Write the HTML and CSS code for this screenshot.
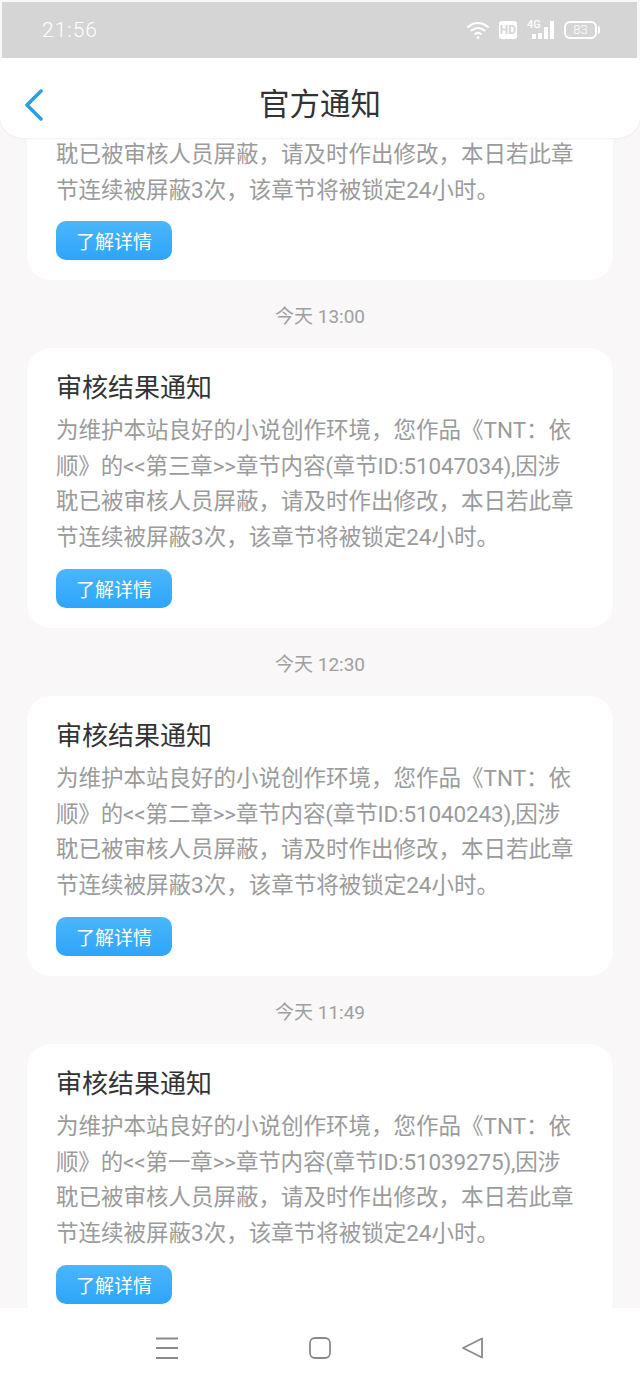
FILE: index.html
```html
<!DOCTYPE HTML>
<html>
<head>
  <title>官方通知</title>
  <meta name="viewport" content="width=device-width, initial-scale=1">
  <link rel="stylesheet" href="styles.css">
</head>
<body>
  <div class="status-bar">
    <span class="clock">21:56</span>
    <div class="status-icons">
      <svg class="wifi" width="22" height="20" viewBox="0 0 22 20" fill="none" stroke="#fff" stroke-width="2" stroke-linecap="round">
        <path d="M1 7C7 1.500 15 1.500 21 7"/>
        <path d="M4.500 10.500C8.500 7 13.500 7 17.500 10.500"/>
        <path d="M8 14C10 12.500 12 12.500 14 14"/>
        <circle cx="11" cy="17.500" r="1.600" fill="#fff" stroke="none"/>
      </svg>
      <span class="hd">HD</span>
      <div class="signal">
        <span class="net">4G</span>
        <i class="bar b1"></i><i class="bar b2"></i><i class="bar b3"></i><i class="bar b4"></i>
      </div>
      <div class="battery"><span>83</span></div>
    </div>
  </div>

  <div class="header">
    <svg class="back" width="20" height="32" viewBox="0 0 20 32" fill="none" stroke="#2a9fe8" stroke-width="3.500" stroke-linecap="round" stroke-linejoin="round">
      <path d="M17 2L3 16L17 30"/>
    </svg>
    <h1>官方通知</h1>
  </div>

  <div class="scroller">
    <div class="list">
      <div class="card card-first">
        <p>耽已被审核人员屏蔽，请及时作出修改，本日若此章<br>节连续被屏蔽3次，该章节将被锁定24小时。</p>
        <button class="more-btn">了解详情</button>
      </div>
      <div class="time">今天 13:00</div>
      <div class="card">
        <h3>审核结果通知</h3>
        <p>为维护本站良好的小说创作环境，您作品《TNT：依<br><span class="tight">顺》的&lt;&lt;第三章&gt;&gt;章节内容(章节ID:51047034),因涉</span><br>耽已被审核人员屏蔽，请及时作出修改，本日若此章<br>节连续被屏蔽3次，该章节将被锁定24小时。</p>
        <button class="more-btn">了解详情</button>
      </div>
      <div class="time">今天 12:30</div>
      <div class="card">
        <h3>审核结果通知</h3>
        <p>为维护本站良好的小说创作环境，您作品《TNT：依<br><span class="tight">顺》的&lt;&lt;第二章&gt;&gt;章节内容(章节ID:51040243),因涉</span><br>耽已被审核人员屏蔽，请及时作出修改，本日若此章<br>节连续被屏蔽3次，该章节将被锁定24小时。</p>
        <button class="more-btn">了解详情</button>
      </div>
      <div class="time">今天 11:49</div>
      <div class="card">
        <h3>审核结果通知</h3>
        <p>为维护本站良好的小说创作环境，您作品《TNT：依<br><span class="tight">顺》的&lt;&lt;第一章&gt;&gt;章节内容(章节ID:51039275),因涉</span><br>耽已被审核人员屏蔽，请及时作出修改，本日若此章<br>节连续被屏蔽3次，该章节将被锁定24小时。</p>
        <button class="more-btn">了解详情</button>
      </div>
    </div>
  </div>

  <div class="nav-bar">
    <svg width="24" height="24" viewBox="0 0 24 24" fill="none" stroke="#8a8a8a" stroke-width="1.800">
      <path d="M1 2.500H23M1 12H23M1 22H23"/>
    </svg>
    <svg width="24" height="24" viewBox="0 0 24 24" fill="none" stroke="#8a8a8a" stroke-width="1.800">
      <rect x="2" y="2" width="20" height="20" rx="5"/>
    </svg>
    <svg width="24" height="24" viewBox="0 0 24 24" fill="none" stroke="#8a8a8a" stroke-width="1.800" stroke-linejoin="round">
      <path d="M2 12L21 2.500V21.500Z"/>
    </svg>
  </div>
</body>
</html>
```

FILE: styles.css
```css
body {
  margin: 0;
  height: 1387px;
  display: flex;
  flex-direction: column;
  overflow: hidden;
  background-color: #f9f7f8;
  font-family: Roboto, "Noto Sans CJK SC", sans-serif;
}

.status-bar {
  flex: none;
  height: 56px;
  margin: 2px 3px 0 2px;
  padding: 0 37px 0 40px;
  display: flex;
  align-items: center;
  justify-content: space-between;
  background-color: #d5d5d5;
  color: #fff;
}

.clock {
  font-size: 21px;
  font-weight: 300;
  letter-spacing: 1px;
}

.status-icons {
  display: flex;
  align-items: center;
  gap: 10px;
  margin-bottom: 1px;
}

.hd {
  width: 18px;
  height: 18px;
  border-radius: 3px;
  background-color: #fff;
  color: #d5d5d5;
  font-size: 12px;
  font-weight: 700;
  line-height: 18px;
  text-align: center;
}

.signal {
  display: flex;
  align-items: flex-end;
  gap: 2.500px;
  height: 19px;
  width: 27px;
  padding-left: 5px;
  box-sizing: border-box;
  position: relative;
}

.net {
  position: absolute;
  left: 0;
  top: 0;
  font-size: 11px;
  font-weight: 500;
  line-height: 10px;
}

.bar {
  width: 3.500px;
  background-color: #fff;
}

.b1 { height: 5px; }
.b2 { height: 6px; }
.b3 { height: 12px; }
.b4 { height: 18px; }

.battery {
  position: relative;
  width: 29px;
  height: 14px;
  border: 2px solid #fff;
  border-radius: 6px;
  font-size: 13px;
  font-weight: 300;
  line-height: 14px;
  text-align: center;
  margin-right: 3px;
}

.battery:after {
  content: "";
  position: absolute;
  right: -5px;
  top: 3px;
  width: 2px;
  height: 8px;
  border-radius: 0 2px 2px 0;
  background-color: #fff;
}

.header {
  flex: none;
  height: 80px;
  display: flex;
  align-items: center;
  justify-content: center;
  position: relative;
  background-color: #fff;
  border-radius: 0 0 22px 22px;
  box-shadow: 0 1px 2px rgba(0, 0, 0, 0.05);
  z-index: 1;
}

.back {
  position: absolute;
  left: 24px;
  top: 31px;
}

h1 {
  margin: 0;
  padding-top: 8px;
  font-size: 30.500px;
  font-weight: 400;
  color: #333;
}

.scroller {
  flex: 1;
  min-height: 0;
  overflow: hidden;
}

.list {
  padding: 0 27px;
}

.card {
  height: 280px;
  box-sizing: border-box;
  padding: 22px 29px 0;
  background-color: #fff;
  border-radius: 24px;
}

.card-first {
  display: flow-root;
  height: 142px;
  padding-top: 0;
  border-radius: 0 0 24px 24px;
}

.card-first p {
  margin: -1px 0 13px;
}

h3 {
  margin: 0;
  font-size: 26px;
  font-weight: 400;
  line-height: 36px;
  color: #333;
}

p {
  margin: 7px 0 14px;
  font-size: 22.500px;
  line-height: 35.600px;
  color: #9b9b9b;
  white-space: nowrap;
}

.tight {
  letter-spacing: -0.150px;
}

.more-btn {
  display: block;
  width: 116px;
  height: 39px;
  padding: 0;
  border: none;
  border-radius: 10px;
  background: linear-gradient(#4ab6fd, #2ea5fa);
  color: #fff;
  font-family: inherit;
  font-size: 19px;
}

.time {
  height: 68px;
  line-height: 74px;
  text-align: center;
  font-size: 19px;
  color: #a0a0a0;
}

.nav-bar {
  flex: none;
  height: 79px;
  padding: 0 155px;
  display: flex;
  align-items: center;
  justify-content: space-between;
  background-color: #fff;
}
```
